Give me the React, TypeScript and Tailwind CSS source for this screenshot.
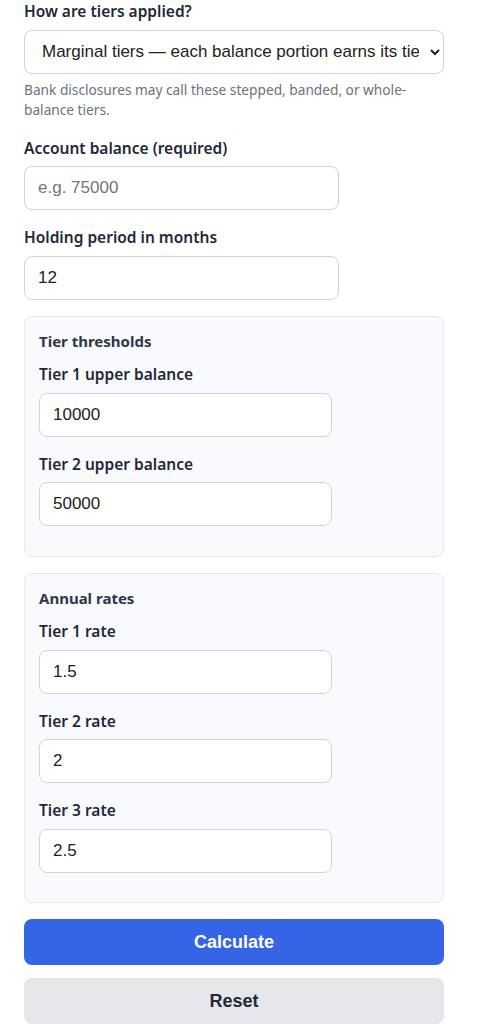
import React from "react";

const labelCls =
  "block text-[15.5px] leading-[22.5px] font-semibold text-[#1f2937] mb-[7px]";
const inputCls =
  "block w-3/4 h-[44px] px-[13px] rounded-lg border border-[#d1d5db] bg-white text-[17px] text-[#222] placeholder:text-[#757575]";
const inputFont = { fontFamily: '"Liberation Sans", Arial, sans-serif' };

function Field({ label, value, placeholder }: { label: string; value?: string; placeholder?: string }) {
  return (
    <div>
      <label className={labelCls}>{label}</label>
      <input
        className={inputCls}
        style={inputFont}
        defaultValue={value}
        placeholder={placeholder}
      />
    </div>
  );
}

function Box({ title, children }: { title: string; children: React.ReactNode }) {
  return (
    <div className="rounded-lg border border-[#e5e7eb] bg-[#f9fafd] px-[14px] pt-[14px] pb-[29.5px]">
      <div className="text-[15px] leading-[20.5px] font-bold text-[#2d3748] mb-[12px]">
        {title}
      </div>
      <div className="flex flex-col gap-4">{children}</div>
    </div>
  );
}

export default function App() {
  return (
    <div
      className="bg-white min-h-[1024px] px-6"
      style={{ fontFamily: '"Noto Sans", "Open Sans", sans-serif' }}
    >
      <div className="w-[420px] flex flex-col">
        <div>
          <label className={labelCls}>How are tiers applied?</label>
          <select
            className="block w-full h-[44px] pl-[13px] pr-[8px] rounded-lg border border-[#d1d5db] bg-white text-[17px] text-[#222]"
            style={inputFont}
            defaultValue="marginal"
          >
            <option value="marginal">
              Marginal tiers — each balance portion earns its tier rate
            </option>
            <option value="whole">Whole-balance tiers</option>
          </select>
          <p className="mt-[6px] text-[13.7px] leading-[20.5px] text-[#6b7280]">
            Bank disclosures may call these stepped, banded, or whole-balance tiers.
          </p>
        </div>
        <div className="mt-[16px] flex flex-col gap-4">
          <Field label="Account balance (required)" placeholder="e.g. 75000" />
          <Field label="Holding period in months" value="12" />
          <Box title="Tier thresholds">
            <Field label="Tier 1 upper balance" value="10000" />
            <Field label="Tier 2 upper balance" value="50000" />
          </Box>
          <Box title="Annual rates">
            <Field label="Tier 1 rate" value="1.5" />
            <Field label="Tier 2 rate" value="2" />
            <Field label="Tier 3 rate" value="2.5" />
          </Box>
          <div className="flex flex-col gap-[13px]">
            <button
              className="h-[46px] w-full rounded-lg bg-[#3565e6] text-white text-[18px] font-bold"
              style={inputFont}
            >
              Calculate
            </button>
            <button
              className="h-[46px] w-full rounded-lg bg-[#e5e7eb] text-[#1f2937] text-[18px] font-bold"
              style={inputFont}
            >
              Reset
            </button>
          </div>
        </div>
      </div>
    </div>
  );
}
